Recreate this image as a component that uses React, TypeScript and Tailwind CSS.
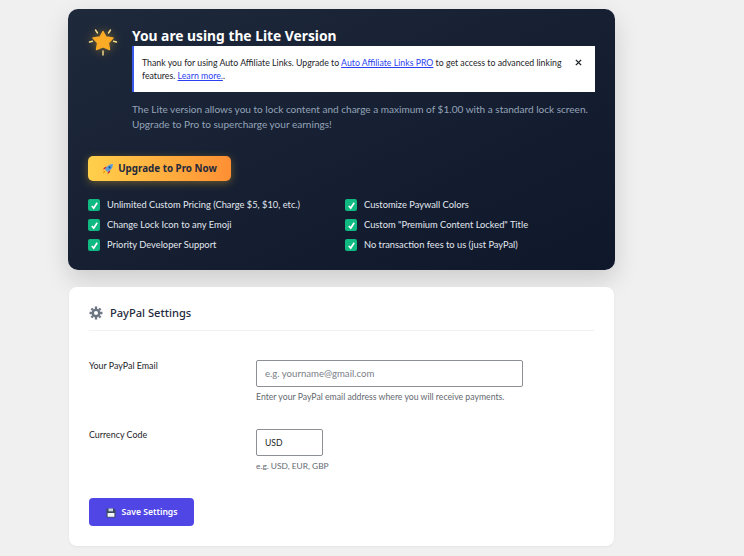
function Check() {
  return (
    <span className="flex h-3 w-3 shrink-0 items-center justify-center rounded-[2px] bg-[#10b981]">
      <svg width="9" height="9" viewBox="0 0 12 12">
        <path d="M2.4 6.6 L5 9.4 L9.6 2.4" fill="none" stroke="#fff" strokeWidth="2.2" />
      </svg>
    </span>
  );
}

function Feature({ text }: { text: string }) {
  return (
    <li className="flex h-5 items-center gap-[7px] text-[9.3px] text-[#e2e8f0]">
      <Check />
      <span>{text}</span>
    </li>
  );
}

function Star() {
  return (
    <svg width="30" height="30" viewBox="0 0 30 30" className="drop-shadow-[0_0_5px_rgba(251,191,36,0.45)]">
      <path d="M15 5.5 L18 11 L25 12 L20.3 17 L21.5 23.5 L15 20.8 L8.5 23.5 L9.7 17 L5 12 L12 11 Z" fill="#fbab26" stroke="#fbab26" strokeWidth="1.5" strokeLinejoin="round" />
      <path d="M7.5 4 L9.5 7 M22.5 4 L20.5 7 M1.5 16 L4.5 15.2 M28.5 16 L25.5 15.2 M15 25 L15 29" stroke="#fde08a" strokeWidth="1.4" strokeLinecap="round" />
    </svg>
  );
}

function Rocket() {
  return (
    <svg width="12" height="12" viewBox="0 0 12 12">
      <path d="M4 8 L1 11 L1.5 8 Z" fill="#f59e0b" />
      <path d="M3 6 L0.8 6.5 L3 4 L5.2 3.8 Z" fill="#c2183c" />
      <path d="M6 9 L5.5 11.2 L8 9 L8.2 6.8 Z" fill="#c2183c" />
      <path d="M3 6.5 C4.5 3 7.5 1 11 1 C11 4.5 9 7.5 5.5 9 Z" fill="#5f9fd8" />
      <circle cx="7.6" cy="4.4" r="1.1" fill="#1f4f8e" />
    </svg>
  );
}

function Floppy() {
  return (
    <svg width="10" height="10" viewBox="0 0 10 10">
      <path d="M0.5 0.5 H8 L9.5 2 V9.5 H0.5 Z" fill="#3d4a5c" />
      <rect x="2.5" y="0.5" width="4.5" height="2.8" fill="#cbd5e1" />
      <rect x="1.6" y="5" width="6.8" height="3.8" fill="#f1f5f9" />
    </svg>
  );
}

export default function App() {
  return (
    <div className="h-[556px] w-[744px] overflow-hidden bg-[#f0f0f1] pl-[68px] pt-[9px] font-['Lato','Noto_Sans',sans-serif]">
      <section className="h-[261px] w-[547px] rounded-[10px] bg-gradient-to-br from-[#1e293b] to-[#0f172a] pl-5 pr-5 pt-[16px] shadow-[0_10px_25px_rgba(0,0,0,0.15)]">
        <div className="flex">
          <div className="w-11 shrink-0 pt-[1px]">
            <Star />
          </div>
          <div className="flex-1">
            <h2 className="font-['Noto_Sans',sans-serif] text-[13.8px] font-bold leading-[21px] text-white">You are using the Lite Version</h2>
            <div className="flex h-[46px] border-l-[2px] border-[#3858e9] bg-white pl-2 pr-[13px] pt-[10px] text-[8.75px] leading-[13px] text-[#1d2327]">
              <p className="flex-1">
                Thank you for using Auto Affiliate Links. Upgrade to <a className="text-[#2b3ff0] underline">Auto Affiliate Links PRO</a> to get access to advanced linking features. <a className="text-[#2b3ff0] underline">Learn more.</a>.
              </p>
              <svg width="7" height="7" viewBox="0 0 8 8" className="ml-2 mt-[3px] shrink-0">
                <path d="M1 1 L7 7 M7 1 L1 7" stroke="#1d2327" strokeWidth="1.6" />
              </svg>
            </div>
            <p className="mt-[10px] text-[10.05px] leading-[15px] text-[#94a3b8]">
              The Lite version allows you to lock content and charge a maximum of $1.00 with a standard lock screen. Upgrade to Pro to supercharge your earnings!
            </p>
          </div>
        </div>
        <button className="mt-[24px] flex h-[25px] w-[143px] items-center justify-center gap-1 rounded-[5px] bg-gradient-to-r from-[#ffd04b] to-[#ff8f34] pt-[1px] font-['Noto_Sans',sans-serif] text-[9.8px] font-bold text-[#1e293b] shadow-[0_2px_8px_rgba(251,191,36,0.35)]">
          <Rocket />
          Upgrade to Pro Now
        </button>
        <ul className="mt-[14px] grid grid-cols-[257px_1fr]">
          <Feature text="Unlimited Custom Pricing (Charge $5, $10, etc.)" />
          <Feature text="Customize Paywall Colors" />
          <Feature text="Change Lock Icon to any Emoji" />
          <Feature text='Custom "Premium Content Locked" Title' />
          <Feature text="Priority Developer Support" />
          <Feature text="No transaction fees to us (just PayPal)" />
        </ul>
      </section>

      <section className="ml-[1px] mt-[17px] h-[259px] w-[545px] rounded-[8px] bg-white px-5 pt-[10px] shadow-[0_1px_3px_rgba(0,0,0,0.05)]">
        <div className="flex h-[34px] items-center gap-[7px] border-b border-[#f1f1f3] pb-[1px]">
          <svg width="14" height="14" viewBox="0 0 24 24" fill="none" stroke="#6b7280" strokeWidth="4">
            <circle cx="12" cy="12" r="5.5" />
            <path d="M12 1 V5 M12 19 V23 M1 12 H5 M19 12 H23 M4.2 4.2 L7 7 M17 17 L19.8 19.8 M4.2 19.8 L7 17 M17 7 L19.8 4.2" />
          </svg>
          <h3 className="font-['Noto_Sans',sans-serif] text-[11.1px] font-medium text-[#1e293b]">PayPal Settings</h3>
        </div>
        <div className="mt-[29px] flex">
          <label className="-mt-[1px] w-[167px] text-[8.9px] leading-[14px] text-[#1d2327]">Your PayPal Email</label>
          <div>
            <input readOnly placeholder="e.g. yourname@gmail.com" className="block h-[27px] w-[267px] rounded-[2px] border border-[#8c8f94] bg-white px-[8px] text-[9.6px] outline-none placeholder:text-[#7b8088]" />
            <p className="mt-[3px] text-[8.7px] leading-[14px] text-[#646970]">Enter your PayPal email address where you will receive payments.</p>
          </div>
        </div>
        <div className="mt-[25px] flex">
          <label className="-mt-[1px] w-[167px] text-[8.9px] leading-[14px] text-[#1d2327]">Currency Code</label>
          <div>
            <input readOnly value="USD" className="block h-[27px] w-[67px] rounded-[2px] border border-[#8c8f94] bg-white px-[8px] text-[8.6px] text-[#1d2327] outline-none" />
            <p className="mt-[3px] text-[8.4px] leading-[14px] text-[#646970]">e.g. USD, EUR, GBP</p>
          </div>
        </div>
        <button className="mt-[25px] flex h-7 w-[105px] items-center justify-center gap-[6px] rounded-[4px] bg-[#4f46e5] pt-[1px] font-['Noto_Sans',sans-serif] text-[8.6px] font-semibold text-white">
          <Floppy />
          Save Settings
        </button>
      </section>
    </div>
  );
}
